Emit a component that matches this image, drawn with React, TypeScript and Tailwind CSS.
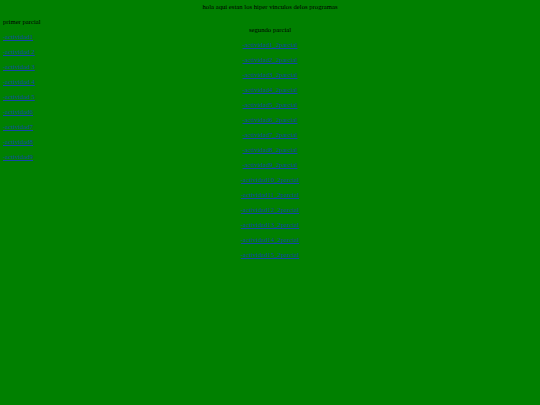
import React from "react";

const primer = [
  "-actividad1",
  "-actividad 2",
  "-actividad 3",
  "-actividad 4",
  "-actividad 5",
  "-actividad6",
  "-actividad7",
  "-actividad8",
  "-actividad9",
];

const segundo = Array.from({ length: 15 }, (_, i) => `-actividad${i + 1}_2parcial`);

export default function App() {
  return (
    <div className="min-h-[405px] w-full bg-[#008000] text-black text-[6.7px] leading-[8px] pt-[3px] antialiased font-['Liberation_Serif',serif]">
      <p className="text-center">hola aqui estan los hiper vinculos delos programas</p>
      <div className="grid grid-cols-[1fr_auto_1fr] mt-[7px]">
        {/* primer parcial */}
        <div className="flex flex-col gap-[7px] pl-[3px]">
          <p>primer parcial</p>
          {primer.map((a) => (
            <a key={a} href="#" className="text-[#1446a8] underline w-fit">
              {a}
            </a>
          ))}
        </div>

        {/* segundo parcial */}
        <div className="flex flex-col items-center gap-[7px] pt-[8px]">
          <p>segundo parcial</p>
          {segundo.map((a) => (
            <a key={a} href="#" className="text-[#1446a8] underline">
              {a}
            </a>
          ))}
        </div>
        <div />
      </div>
    </div>
  );
}
